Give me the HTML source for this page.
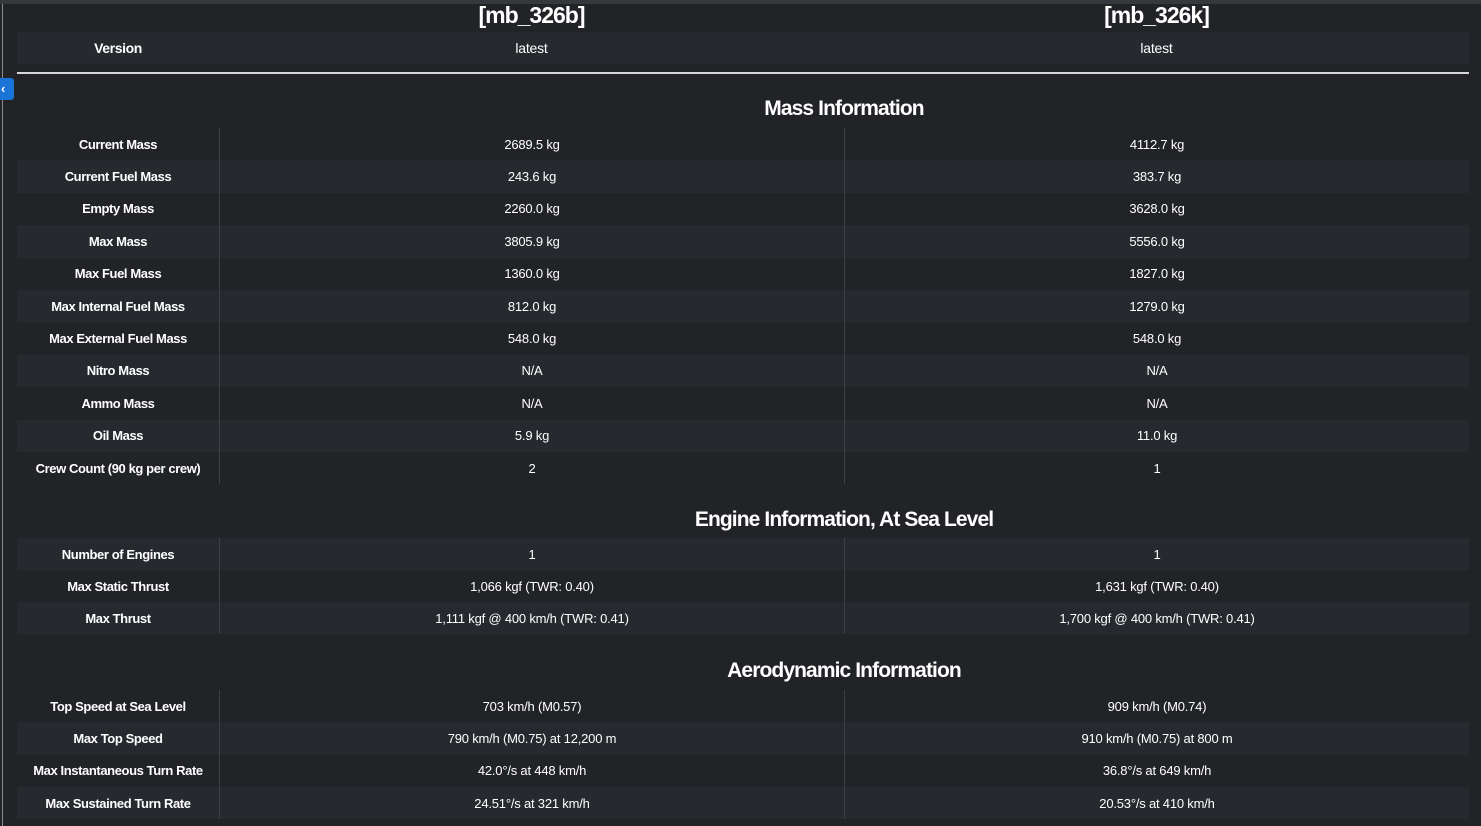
<!DOCTYPE html>
<html><head><meta charset="utf-8"><style>
*{margin:0;padding:0;box-sizing:border-box}
body{width:1481px;height:826px;background:#212327;font-family:"Liberation Sans",sans-serif;color:#fff;position:relative;overflow:hidden}
.top{position:absolute;left:0;top:0;width:1481px;height:4px;background:#35383d}
.lb{position:absolute;left:2px;top:4px;width:1px;height:822px;background:#8a8c90}
.tab{position:absolute;left:0;top:78px;width:14px;height:22px;background:#1a73d6;border-radius:0 3px 3px 0;color:#fff;font-size:13px;font-weight:bold;line-height:22px;padding-left:1px}
.row{position:absolute;left:17px;width:1452px;font-size:13px;letter-spacing:-0.2px}
.row.s{background:#26292e}
.row div{position:absolute;top:0;height:100%;display:flex;align-items:center;justify-content:center;text-align:center}
.c0{left:0;width:202px;font-weight:bold;letter-spacing:-0.4px}
.c1{left:202px;width:625px;border-left:1px solid #3c3f44}
.c2{left:827px;width:625px;border-left:1px solid #3c3f44}
.nb .c1,.nb .c2{border-left:none}
.h{position:absolute;left:219px;width:1250px;text-align:center;font-weight:bold;font-size:21px;letter-spacing:-0.9px}
.nm{position:absolute;top:2px;font-weight:bold;font-size:23px;letter-spacing:-1px;text-align:center;width:625px}
.hr{position:absolute;left:17px;top:72px;width:1452px;height:2px;background:#d8d8d8}
</style></head><body>
<div class="top"></div><div class="lb"></div>
<div class="tab">&#8249;</div>
<div class="nm" style="left:219px">[mb_326b]</div>
<div class="nm" style="left:844px">[mb_326k]</div>
<div class="row s nb" style="top:32px;height:32px;font-size:14px"><div class="c0">Version</div><div class="c1" style="font-weight:normal">latest</div><div class="c2">latest</div></div>
<div class="hr"></div>

<div class="h" style="top:97px">Mass Information</div>
<div class="row" style="top:128px;height:32.4px"><div class="c0">Current Mass</div><div class="c1">2689.5 kg</div><div class="c2">4112.7 kg</div></div>
<div class="row s" style="top:160.4px;height:32.4px"><div class="c0">Current Fuel Mass</div><div class="c1">243.6 kg</div><div class="c2">383.7 kg</div></div>
<div class="row" style="top:192.8px;height:32.4px"><div class="c0">Empty Mass</div><div class="c1">2260.0 kg</div><div class="c2">3628.0 kg</div></div>
<div class="row s" style="top:225.2px;height:32.4px"><div class="c0">Max Mass</div><div class="c1">3805.9 kg</div><div class="c2">5556.0 kg</div></div>
<div class="row" style="top:257.6px;height:32.4px"><div class="c0">Max Fuel Mass</div><div class="c1">1360.0 kg</div><div class="c2">1827.0 kg</div></div>
<div class="row s" style="top:290px;height:32.4px"><div class="c0">Max Internal Fuel Mass</div><div class="c1">812.0 kg</div><div class="c2">1279.0 kg</div></div>
<div class="row" style="top:322.4px;height:32.4px"><div class="c0">Max External Fuel Mass</div><div class="c1">548.0 kg</div><div class="c2">548.0 kg</div></div>
<div class="row s" style="top:354.8px;height:32.4px"><div class="c0">Nitro Mass</div><div class="c1">N/A</div><div class="c2">N/A</div></div>
<div class="row" style="top:387.2px;height:32.4px"><div class="c0">Ammo Mass</div><div class="c1">N/A</div><div class="c2">N/A</div></div>
<div class="row s" style="top:419.6px;height:32.4px"><div class="c0">Oil Mass</div><div class="c1">5.9 kg</div><div class="c2">11.0 kg</div></div>
<div class="row" style="top:452px;height:32.4px"><div class="c0">Crew Count (90 kg per crew)</div><div class="c1">2</div><div class="c2">1</div></div>

<div class="h" style="top:508px">Engine Information, At Sea Level</div>
<div class="row s" style="top:538px;height:32px"><div class="c0">Number of Engines</div><div class="c1">1</div><div class="c2">1</div></div>
<div class="row" style="top:570px;height:32px"><div class="c0">Max Static Thrust</div><div class="c1">1,066 kgf (TWR: 0.40)</div><div class="c2">1,631 kgf (TWR: 0.40)</div></div>
<div class="row s" style="top:602px;height:32px"><div class="c0">Max Thrust</div><div class="c1">1,111 kgf @ 400 km/h (TWR: 0.41)</div><div class="c2">1,700 kgf @ 400 km/h (TWR: 0.41)</div></div>

<div class="h" style="top:659px">Aerodynamic Information</div>
<div class="row" style="top:690px;height:32.3px"><div class="c0">Top Speed at Sea Level</div><div class="c1">703 km/h (M0.57)</div><div class="c2">909 km/h (M0.74)</div></div>
<div class="row s" style="top:722.3px;height:32.3px"><div class="c0">Max Top Speed</div><div class="c1">790 km/h (M0.75) at 12,200 m</div><div class="c2">910 km/h (M0.75) at 800 m</div></div>
<div class="row" style="top:754.6px;height:32.3px"><div class="c0">Max Instantaneous Turn Rate</div><div class="c1">42.0°/s at 448 km/h</div><div class="c2">36.8°/s at 649 km/h</div></div>
<div class="row s" style="top:786.9px;height:32.3px"><div class="c0">Max Sustained Turn Rate</div><div class="c1">24.51°/s at 321 km/h</div><div class="c2">20.53°/s at 410 km/h</div></div>
</body></html>
